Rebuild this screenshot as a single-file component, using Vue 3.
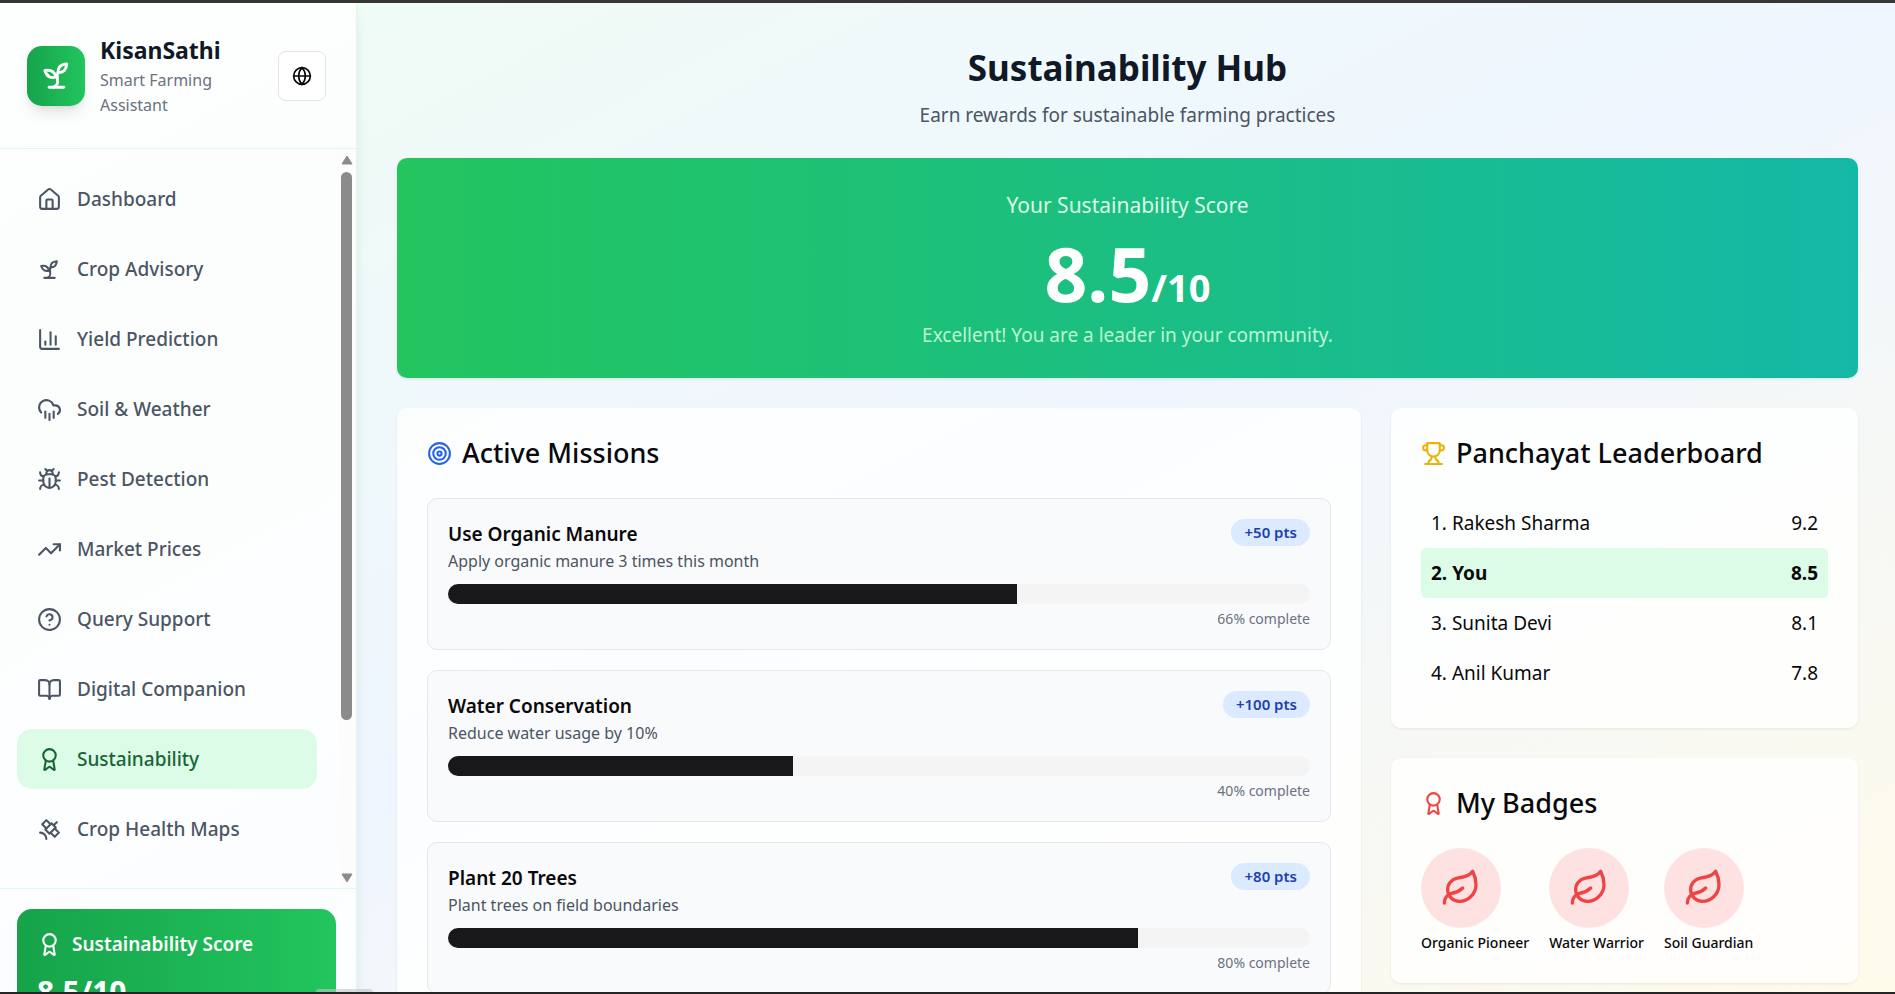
<script setup>
import { h } from 'vue'

const icons = {
  house: ['M15 21v-8a1 1 0 0 0-1-1h-4a1 1 0 0 0-1 1v8', 'M3 10a2 2 0 0 1 .709-1.528l7-5.999a2 2 0 0 1 2.582 0l7 5.999A2 2 0 0 1 21 10v9a2 2 0 0 1-2 2H5a2 2 0 0 1-2-2z'],
  sprout: ['M7 20h10', 'M10 20c5.5-2.5.8-6.4 3-10', 'M9.5 9.4c1.1.8 1.8 2.2 2.3 3.7-2 .4-3.5.4-4.8-.3-1.2-.6-2.3-1.9-3-4.2 2.8-.5 4.4 0 5.5.8z', 'M14.1 6a7 7 0 0 0-1.1 4c1.9-.1 3.3-.6 4.3-1.4 1-1 1.6-2.3 1.7-4.6-2.7.1-4 1-4.9 2z'],
  chart: ['M3 3v16a2 2 0 0 0 2 2h16', 'M18 17V9', 'M13 17V5', 'M8 17v-3'],
  rain: ['M4 14.899A7 7 0 1 1 15.71 8h1.79a4.5 4.5 0 0 1 2.5 8.242', 'M16 14v6', 'M8 14v6', 'M12 16v6'],
  bug: ['m8 2 1.88 1.88', 'M14.12 3.88 16 2', 'M9 7.13v-1a3.003 3.003 0 1 1 6 0v1', 'M12 20c-3.3 0-6-2.7-6-6v-3a4 4 0 0 1 4-4h4a4 4 0 0 1 4 4v3c0 3.3-2.7 6-6 6', 'M12 20v-9', 'M6.53 9C4.6 8.8 3 7.1 3 5', 'M6 13H2', 'M3 21c0-2.1 1.7-3.9 3.8-4', 'M20.97 5c0 2.1-1.6 3.8-3.5 4', 'M22 13h-4', 'M17.2 17c2.1.1 3.8 1.9 3.8 4'],
  trend: ['M22 7 13.5 15.5 8.5 10.5 2 17', 'M16 7h6v6'],
  help: ['M22 12a10 10 0 1 1-20 0 10 10 0 0 1 20 0z', 'M9.09 9a3 3 0 0 1 5.83 1c0 2-3 3-3 3', 'M12 17h.01'],
  book: ['M12 7v14', 'M3 18a1 1 0 0 1-1-1V4a1 1 0 0 1 1-1h5a4 4 0 0 1 4 4 4 4 0 0 1 4-4h5a1 1 0 0 1 1 1v13a1 1 0 0 1-1 1h-6a3 3 0 0 0-3 3 3 3 0 0 0-3-3z'],
  award: ['m15.477 12.89 1.515 8.526a.5.5 0 0 1-.81.47l-3.58-2.687a1 1 0 0 0-1.197 0l-3.586 2.686a.5.5 0 0 1-.81-.469l1.514-8.526', 'M18 8a6 6 0 1 1-12 0 6 6 0 0 1 12 0z'],
  satellite: ['M13 7 9 3 5 7l4 4', 'm17 11 4 4-4 4-4-4', 'm8 12 4 4 6-6-4-4Z', 'm16 8 3-3', 'M9 21a6 6 0 0 0-6-6'],
  globe: ['M22 12a10 10 0 1 1-20 0 10 10 0 0 1 20 0z', 'M12 2a14.5 14.5 0 0 0 0 20 14.5 14.5 0 0 0 0-20', 'M2 12h20'],
  target: ['M22 12a10 10 0 1 1-20 0 10 10 0 0 1 20 0z', 'M18 12a6 6 0 1 1-12 0 6 6 0 0 1 12 0z', 'M14 12a2 2 0 1 1-4 0 2 2 0 0 1 4 0z'],
  trophy: ['M6 9H4.5a2.5 2.5 0 0 1 0-5H6', 'M18 9h1.5a2.5 2.5 0 0 0 0-5H18', 'M4 22h16', 'M10 14.66V17c0 .55-.47.98-.97 1.21C7.85 18.75 7 20.24 7 22', 'M14 14.66V17c0 .55.47.98.97 1.21C16.15 18.75 17 20.24 17 22', 'M18 2H6v7a6 6 0 0 0 12 0V2Z'],
  leaf: ['M11 20A7 7 0 0 1 9.8 6.1C15.5 5 17 4.48 19 2c1 2 2 4.18 2 8 0 5.5-4.78 10-10 10Z', 'M2 21c0-3 1.85-5.36 5.08-6C9.5 14.52 12 13 13 12'],
}

const Icon = (props) =>
  h(
    'svg',
    {
      viewBox: '0 0 24 24',
      width: props.size || 25,
      height: props.size || 25,
      fill: 'none',
      stroke: 'currentColor',
      'stroke-width': 2,
      'stroke-linecap': 'round',
      'stroke-linejoin': 'round',
      'aria-hidden': 'true',
    },
    icons[props.name].map((d) => h('path', { d })),
  )
Icon.props = ['name', 'size']

const nav = [
  { label: 'Dashboard', icon: 'house' },
  { label: 'Crop Advisory', icon: 'sprout' },
  { label: 'Yield Prediction', icon: 'chart' },
  { label: 'Soil & Weather', icon: 'rain' },
  { label: 'Pest Detection', icon: 'bug' },
  { label: 'Market Prices', icon: 'trend' },
  { label: 'Query Support', icon: 'help' },
  { label: 'Digital Companion', icon: 'book' },
  { label: 'Sustainability', icon: 'award', active: true },
  { label: 'Crop Health Maps', icon: 'satellite' },
]

const missions = [
  { title: 'Use Organic Manure', text: 'Apply organic manure 3 times this month', points: 50, progress: 66 },
  { title: 'Water Conservation', text: 'Reduce water usage by 10%', points: 100, progress: 40 },
  { title: 'Plant 20 Trees', text: 'Plant trees on field boundaries', points: 80, progress: 80 },
]

const leaders = [
  { name: 'Rakesh Sharma', score: '9.2' },
  { name: 'You', score: '8.5', me: true },
  { name: 'Sunita Devi', score: '8.1' },
  { name: 'Anil Kumar', score: '7.8' },
]

const badges = ['Organic Pioneer', 'Water Warrior', 'Soil Guardian']
</script>

<template>
  <div class="app">
    <aside class="sidebar">
      <header class="brand">
        <div class="logo"><Icon name="sprout" :size="35" /></div>
        <div class="brand-text">
          <h2>KisanSathi</h2>
          <p>Smart Farming Assistant</p>
        </div>
        <button class="lang" type="button" aria-label="Change language"><Icon name="globe" :size="20" /></button>
      </header>

      <div class="nav-area">
        <nav>
          <a v-for="n in nav" :key="n.label" href="#" :class="{ active: n.active }">
            <Icon :name="n.icon" />
            <span>{{ n.label }}</span>
          </a>
        </nav>
        <div class="scrollbar" aria-hidden="true">
          <svg width="12" height="10" viewBox="0 0 12 10"><path d="M6 1 11 9H1Z" /></svg>
          <div class="track"><div class="thumb"></div></div>
          <svg width="12" height="10" viewBox="0 0 12 10"><path d="M1 1H11L6 9Z" /></svg>
        </div>
      </div>

      <footer class="side-foot">
        <div class="side-score">
          <div class="side-score-title"><Icon name="award" /><span>Sustainability Score</span></div>
          <div class="side-score-value">8.5/10</div>
        </div>
      </footer>
    </aside>

    <main>
      <header class="page-head">
        <h1>Sustainability Hub</h1>
        <p>Earn rewards for sustainable farming practices</p>
      </header>

      <section class="banner">
        <p class="banner-label">Your Sustainability Score</p>
        <p class="banner-value">8.5<span>/10</span></p>
        <p class="banner-note">Excellent! You are a leader in your community.</p>
      </section>

      <div class="grid">
        <section class="card">
          <h3><Icon name="target" class="blue" />Active Missions</h3>
          <div class="missions">
            <article v-for="m in missions" :key="m.title" class="mission">
              <div class="mission-head">
                <div>
                  <h4>{{ m.title }}</h4>
                  <p>{{ m.text }}</p>
                </div>
                <span class="points">+{{ m.points }} pts</span>
              </div>
              <div class="progress" role="progressbar" :aria-label="m.title" :aria-valuenow="m.progress" aria-valuemin="0" aria-valuemax="100">
                <div class="fill" :style="{ width: m.progress + '%' }"></div>
              </div>
              <p class="done">{{ m.progress }}% complete</p>
            </article>
          </div>
        </section>

        <div class="side-col">
          <section class="card">
            <h3><Icon name="trophy" class="gold" />Panchayat Leaderboard</h3>
            <ol class="leaders">
              <li v-for="(l, i) in leaders" :key="l.name" :class="{ me: l.me }">
                <span>{{ i + 1 }}. {{ l.name }}</span>
                <span>{{ l.score }}</span>
              </li>
            </ol>
          </section>

          <section class="card">
            <h3><Icon name="award" class="red" />My Badges</h3>
            <ul class="badges">
              <li v-for="b in badges" :key="b">
                <div class="medal"><Icon name="leaf" :size="40" /></div>
                <span>{{ b }}</span>
              </li>
            </ul>
          </section>
        </div>
      </div>
    </main>

    <div class="peek" aria-hidden="true"></div>
  </div>
</template>

<style>
body {
  margin: 0;
}
</style>

<style scoped>
* {
  box-sizing: border-box;
}
h1, h2, h3, h4, p, ul, ol {
  margin: 0;
  padding: 0;
}
ul, ol {
  list-style: none;
}
svg {
  flex: none;
  display: block;
}
.app {
  position: relative;
  display: flex;
  height: 100vh;
  overflow: hidden;
  border-top: 3px solid #363636;
  border-bottom: 2px solid #252525;
  background: linear-gradient(to bottom right, #f0fdf4, #eff6ff 50%, #fffbeb);
  color: #09090b;
  font-family: "Noto Sans", "Open Sans", sans-serif;
  font-size: 19px;
  line-height: 30px;
}
.peek {
  position: absolute;
  left: 316px;
  bottom: 0;
  width: 57px;
  height: 3px;
  border-radius: 6px 6px 0 0;
  background: rgba(190, 198, 200, 0.6);
}

.sidebar {
  flex: none;
  width: 357px;
  display: flex;
  flex-direction: column;
  background: rgba(255, 255, 255, 0.8);
  border-right: 1px solid #dcfce7;
  box-shadow: 0 10px 15px -3px rgba(0, 0, 0, 0.1), 0 4px 6px -4px rgba(0, 0, 0, 0.1);
}
.brand {
  flex: none;
  display: flex;
  align-items: center;
  height: 146px;
  padding: 0 30px 0 27px;
  border-bottom: 1px solid #dcfce7;
}
.logo {
  flex: none;
  display: grid;
  place-items: center;
  width: 58px;
  height: 60px;
  border-radius: 15px;
  color: #fff;
  background: linear-gradient(to right, #16a34a, #22c55e);
  box-shadow: 0 10px 15px -3px rgba(0, 0, 0, 0.1), 0 4px 6px -4px rgba(0, 0, 0, 0.1);
}
.brand-text {
  flex: 1;
  margin: 0 25px 0 15px;
}
.brand-text h2 {
  font-size: 23px;
  line-height: 35px;
  font-weight: 700;
  color: #111827;
}
.brand-text p {
  font-size: 16px;
  line-height: 25px;
  color: #6b7280;
}
.lang {
  display: grid;
  place-items: center;
  width: 48px;
  height: 50px;
  padding: 0;
  border: 1px solid #e4e4e7;
  border-radius: 8px;
  background: #fff;
  color: #09090b;
}
.nav-area {
  flex: 1;
  min-height: 0;
  display: flex;
}
nav {
  flex: 1;
  display: flex;
  flex-direction: column;
  gap: 10px;
  padding: 20px 21px 20px 17px;
  overflow: hidden;
}
nav a {
  flex: none;
  display: flex;
  align-items: center;
  gap: 15px;
  height: 60px;
  padding: 0 20px;
  border-radius: 15px;
  color: #4b5563;
  font-weight: 500;
  text-decoration: none;
}
nav a.active {
  background: #dcfce7;
  color: #166534;
}
.scrollbar {
  width: 18px;
  display: flex;
  flex-direction: column;
  align-items: center;
  gap: 7px;
  padding: 6px 1px 5px 0;
  background: #fcfcfc;
}
.scrollbar svg {
  fill: #8b8b8b;
  stroke: #8b8b8b;
  stroke-linejoin: round;
}
.track {
  flex: 1;
}
.thumb {
  width: 11px;
  height: 79%;
  border-radius: 6px;
  background: #8b8b8b;
}
.side-foot {
  flex: none;
  height: 104px;
  padding: 20px 20px 0 17px;
  border-top: 1px solid #dcfce7;
  overflow: hidden;
}
.side-score {
  padding: 20px;
  border-radius: 15px;
  color: #fff;
  background: linear-gradient(to right, #16a34a, #22c55e);
}
.side-score-title {
  display: flex;
  align-items: center;
  gap: 10px;
  margin-bottom: 10px;
  font-weight: 600;
}
.side-score-value {
  font-size: 30px;
  line-height: 45px;
  font-weight: 700;
}

main {
  flex: 1;
  min-width: 0;
  padding: 40px 37px 0 40px;
  overflow: hidden;
}
.page-head {
  margin-bottom: 25px;
  text-align: center;
}
.page-head h1 {
  margin-bottom: 5px;
  font-size: 35px;
  line-height: 50px;
  font-weight: 700;
  color: #111827;
}
.page-head p {
  line-height: 35px;
  color: #4b5563;
}
.banner {
  padding: 30px;
  margin-bottom: 30px;
  border-radius: 10px;
  text-align: center;
  color: #fff;
  background: linear-gradient(to right, #22c55e, #14b8a6);
  box-shadow: 0 1px 3px rgba(0, 0, 0, 0.1);
}
.banner-label {
  font-size: 21px;
  line-height: 35px;
  color: #dcfce7;
}
.banner-value {
  font-size: 75px;
  line-height: 100px;
  font-weight: 700;
}
.banner-value span {
  font-size: 38px;
  line-height: 40px;
}
.banner-note {
  line-height: 25px;
  color: #bbf7d0;
}
.grid {
  display: grid;
  grid-template-columns: repeat(3, minmax(0, 1fr));
  gap: 30px;
  align-items: start;
}
.grid > .card {
  grid-column: span 2;
}
.side-col {
  display: flex;
  flex-direction: column;
  gap: 30px;
}
.card {
  padding: 30px;
  border-radius: 10px;
  background: rgba(255, 255, 255, 0.8);
  box-shadow: 0 1px 3px rgba(0, 0, 0, 0.08);
}
.card h3 {
  display: flex;
  align-items: center;
  gap: 10px;
  margin-bottom: 30px;
  font-size: 27px;
  line-height: 30px;
  font-weight: 500;
}
.blue {
  color: #2563eb;
}
.gold {
  color: #eab308;
}
.red {
  color: #ef4444;
}
.missions {
  display: flex;
  flex-direction: column;
  gap: 20px;
}
.mission {
  padding: 20px;
  border: 1px solid #e5e7eb;
  border-radius: 10px;
  background: #f9fafb;
}
.mission-head {
  display: flex;
  justify-content: space-between;
  align-items: flex-start;
  margin-bottom: 10px;
}
.mission h4 {
  font-size: 19px;
  line-height: 30px;
  font-weight: 600;
}
.mission-head p {
  font-size: 16px;
  line-height: 25px;
  color: #4b5563;
}
.points {
  padding: 0 13px;
  border-radius: 14px;
  background: #dbeafe;
  color: #1e40af;
  font-size: 15px;
  line-height: 27px;
  font-weight: 600;
}
.progress {
  height: 20px;
  margin-bottom: 5px;
  border-radius: 10px;
  overflow: hidden;
  background: #f4f4f5;
}
.fill {
  height: 100%;
  background: #18181b;
}
.done {
  font-size: 14px;
  line-height: 20px;
  text-align: right;
  color: #6b7280;
}
.leaders li {
  display: flex;
  justify-content: space-between;
  padding: 10px;
  border-radius: 5px;
}
.leaders .me {
  background: #dcfce7;
  font-weight: 700;
}
.badges {
  display: flex;
  gap: 20px;
}
.badges li {
  font-size: 14px;
  line-height: 20px;
  font-weight: 500;
}
.medal {
  display: grid;
  place-items: center;
  width: 80px;
  height: 80px;
  margin-bottom: 5px;
  border-radius: 50%;
  background: #fee2e2;
  color: #ef4444;
}
</style>
